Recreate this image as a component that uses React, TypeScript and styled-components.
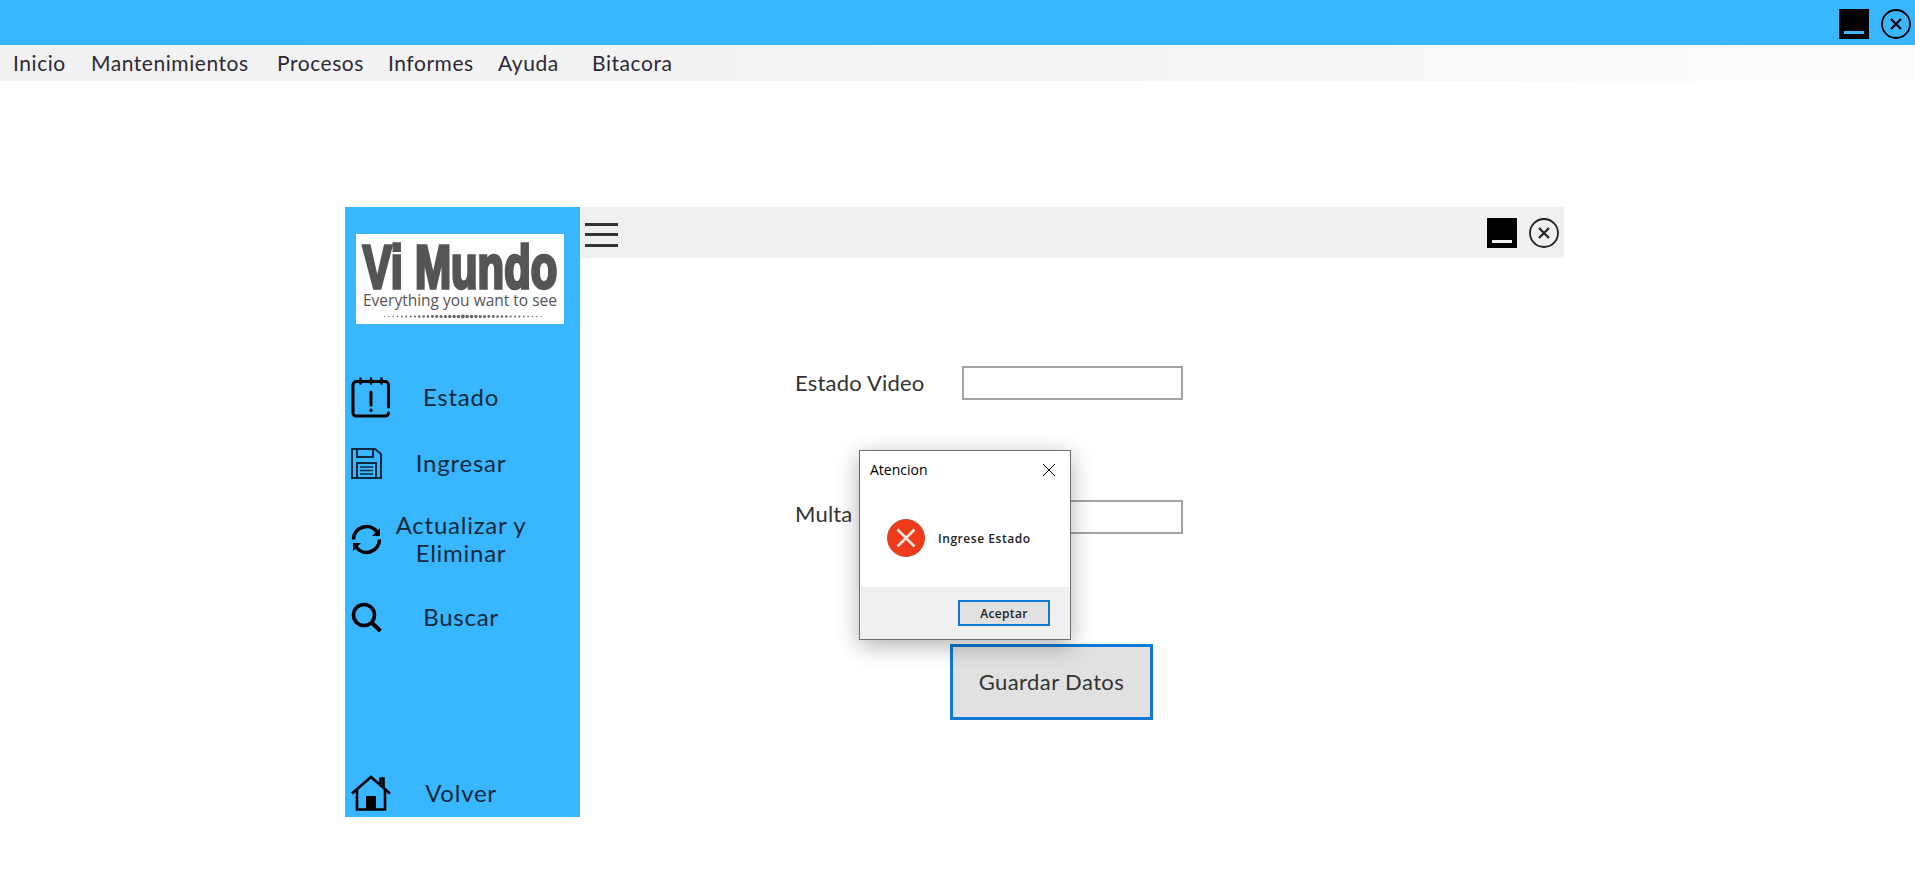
import React from "react";
import styled, { createGlobalStyle } from "styled-components";

const Global = createGlobalStyle`
  html, body { margin: 0; padding: 0; background: #fff; overflow: hidden; }
  body { font-family: "Lato", "Liberation Sans", sans-serif; }
  * { box-sizing: border-box; }
`;

const Page = styled.div`
  width: 1915px;
  height: 871px;
  display: flex;
  flex-direction: column;
`;
const TitleBar = styled.header`
  height: 45px;
  background: #38b6ff;
  display: flex;
  justify-content: flex-end;
  align-items: flex-start;
  gap: 12px;
  padding: 9px 4px 0 0;
`;
const WinButton = styled.button`
  width: 30px;
  height: 30px;
  padding: 0;
  border: 0;
  background: none;
  display: block;
  svg { display: block; }
`;
const MinBlock = styled.button<{ $dash: string }>`
  width: 30px;
  height: 30px;
  padding: 0 0 5px;
  border: 0;
  background: #000;
  display: flex;
  align-items: flex-end;
  justify-content: center;
  &::after {
    content: "";
    width: 20px;
    height: 3px;
    background: ${(p) => p.$dash};
  }
`;
const MenuBar = styled.nav`
  height: 36px;
  background: linear-gradient(90deg, #f1f1f1, #f5f5f5 55%, #fcfcfc);
  display: grid;
  grid-template-columns: 78px 186px 111px 110px 94px auto;
  justify-content: start;
  align-items: center;
  padding-left: 13px;
`;
const MenuItem = styled.span`
  font-size: 21px;
  line-height: 34px;
  letter-spacing: 0.55px;
  color: #2f2935;
`;
const Window = styled.section`
  margin: 126px 0 0 345px;
  width: 1219px;
  height: 610px;
  display: flex;
`;
const Sidebar = styled.aside`
  width: 235px;
  background: #38b6ff;
  display: flex;
  flex-direction: column;
  padding-top: 27px;
`;
const Logo = styled.div`
  width: 208px;
  height: 90px;
  margin: 0 0 40px 11px;
  background: #fff;
  display: flex;
  flex-direction: column;
  align-items: center;
  color: #555;
`;
const LogoTitle = styled.div`
  font-family: "Liberation Sans", sans-serif;
  font-weight: 700;
  font-size: 62px;
  line-height: 48px;
  height: 48px;
  margin-top: 9px;
  -webkit-text-stroke: 3.5px #555;
  white-space: nowrap;
  transform: scaleX(0.7);
`;
const LogoSub = styled.div`
  font-family: "Open Sans", sans-serif;
  font-size: 15.5px;
  line-height: 18px;
  white-space: nowrap;
`;
const LogoDots = styled.svg`
  display: block;
  margin: 5px 0 0 6px;
`;
const NavItem = styled.div<{ $h: number }>`
  height: ${(p) => p.$h}px;
  display: grid;
  grid-template-columns: 39px 142px;
  align-items: center;
  padding-left: 6px;
  flex: none;
  svg { display: block; overflow: visible; }
`;
const NavLabel = styled.span`
  text-align: center;
  font-size: 24px;
  line-height: 28px;
  letter-spacing: 0.75px;
  color: #10293a;
`;
const Spacer = styled.div`
  flex: 1;
`;
const Main = styled.main`
  flex: 1;
  position: relative;
  display: flex;
  flex-direction: column;
`;
const PanelHeader = styled.div`
  height: 51px;
  background: #f0f0f0;
  display: flex;
  align-items: center;
  padding: 0 5px;
  gap: 12px;
`;
const Burger = styled.div`
  width: 33px;
  margin: 4px auto 0 0;
  display: flex;
  flex-direction: column;
  gap: 7.5px;
  span { display: block; height: 3px; background: #333; }
`;
const Form = styled.div`
  display: grid;
  grid-template-columns: 167px 221px;
  grid-auto-rows: 34px;
  row-gap: 100px;
  margin: 108px 0 0 215px;
  align-items: center;
`;
const Label = styled.label<{ $up?: number }>`
  font-size: 22px;
  line-height: 30px;
  letter-spacing: 0.2px;
  color: #333;
  margin-top: ${(p) => -(p.$up ?? 0)}px;
`;
const Field = styled.input`
  height: 34px;
  border: 2px solid #a3a3a3;
  background: #fff;
  outline: none;
`;
const SaveButton = styled.button`
  width: 203px;
  height: 76px;
  margin: 110px 0 0 370px;
  padding: 0 0 2px;
  border: 3px solid #0f7ad5;
  background: #e1e1e1;
  font-family: inherit;
  font-size: 22px;
  letter-spacing: 0.4px;
  color: #333;
`;
const Dialog = styled.div`
  position: absolute;
  left: 279px;
  top: 243px;
  width: 212px;
  height: 190px;
  background: #fff;
  border: 1px solid #6f6f6f;
  box-shadow: 0 6px 22px rgba(0, 0, 0, 0.3);
  display: flex;
  flex-direction: column;
  font-family: "Open Sans", sans-serif;
`;
const DialogTitle = styled.div`
  height: 37px;
  padding: 0 14px 0 10px;
  display: flex;
  align-items: center;
  justify-content: space-between;
  font-size: 14px;
  color: #000;
  svg { display: block; }
`;
const DialogBody = styled.div`
  flex: 1;
  display: flex;
  align-items: center;
  gap: 13px;
  padding: 1px 0 0 27px;
  font-size: 12px;
  font-weight: 600;
  letter-spacing: 0.55px;
  color: #222;
  svg { display: block; }
`;
const DialogFooter = styled.div`
  height: 52px;
  background: #f0f0f0;
  display: flex;
  justify-content: flex-end;
  padding: 13px 20px 0 0;
`;
const DialogButton = styled.button`
  width: 92px;
  height: 26px;
  padding: 1px 0 0;
  border: 2px solid #0f7ad5;
  background: #e1e1e1;
  font-family: inherit;
  font-size: 12px;
  font-weight: 600;
  letter-spacing: 0.3px;
  color: #222;
`;

const CloseCircle = ({ color = "#000" }: { color?: string }) => (
  <svg width="30" height="30" viewBox="0 0 30 30" fill="none" stroke={color}>
    <circle cx="15" cy="15" r="14" strokeWidth="1.8" />
    <path d="M10 10 L20 20 M20 10 L10 20" strokeWidth="2.2" />
  </svg>
);

const CalendarIcon = () => (
  <svg width="40" height="40" viewBox="0 0 40 40" fill="none" stroke="#000" strokeWidth="3" strokeLinecap="round" strokeLinejoin="round">
    <path d="M10 4.5H5.5a3.5 3.5 0 0 0-3.5 3.5v28a3 3 0 0 0 3 3h29a3.5 3.5 0 0 0 3.5-3" />
    <path d="M30 4.5h4a3.5 3.5 0 0 1 3.5 3.5v22" />
    <path d="M9.5 4.5h21" />
    <path d="M9.5 1.5v5M20 1.5v5M30.5 1.5v5" strokeWidth="2.5" />
    <path d="M20 15v13" />
    <path d="M20 33v.5" strokeWidth="3.2" />
  </svg>
);
const SaveIcon = () => (
  <svg width="31" height="31" viewBox="0 0 31 31" fill="none" stroke="#0c2a3f" strokeWidth="2">
    <path d="M1 1H24L30 6V30H1Z" />
    <path d="M6 1V9H22V1" />
    <path d="M6 30V15H25V30" />
    <path d="M9 19H22M9 22.5H22M9 26H22" strokeWidth="1.6" />
  </svg>
);
const RefreshIcon = () => (
  <svg width="31" height="31" viewBox="0 0 31 31" fill="none" stroke="#000" strokeWidth="3.6">
    <path d="M2.5 15.5A13 13 0 0 1 26 8" />
    <path d="M28.5 15.5A13 13 0 0 1 5 23" />
    <path d="M29 4V12H21Z" fill="#000" stroke="none" />
    <path d="M2 27V19H10Z" fill="#000" stroke="none" />
  </svg>
);
const SearchIcon = () => (
  <svg width="31" height="31" viewBox="0 0 31 31" fill="none" stroke="#000" strokeWidth="3.6">
    <circle cx="13" cy="13" r="10.5" />
    <path d="M20.5 20.5L29.5 29" strokeWidth="4" />
  </svg>
);
const HomeIcon = () => (
  <svg width="40" height="36" viewBox="0 0 40 36" fill="none" stroke="#000" strokeWidth="2.6">
    <path d="M1 18.5L20 2L39 18.5" />
    <path d="M6 15V34.5H34V15" />
    <path d="M29.5 9V3.5H32.5V12" />
    <rect x="15" y="21" width="10" height="13.5" fill="#000" stroke="none" />
  </svg>
);
const ErrorIcon = () => (
  <svg width="38" height="38" viewBox="0 0 38 38">
    <circle cx="19" cy="19" r="18.5" fill="#ef3b19" stroke="#c8492f" strokeWidth="1" />
    <path d="M10.5 10.5L27.5 27.5M27.5 10.5L10.5 27.5" stroke="#fbe6e0" strokeWidth="2.6" />
  </svg>
);
const XIcon = () => (
  <svg width="14" height="14" viewBox="0 0 14 14" stroke="#000" strokeWidth="1">
    <path d="M1 1L13 13M13 1L1 13" />
  </svg>
);

const dots = Array.from({ length: 37 }, (_, i) => {
  const d = Math.abs(i - 18) / 18;
  return { x: 1.5 + i * 4.35, r: 1.9 - d * 1.3 };
});

const nav = [
  { label: "Estado", h: 66, icon: <CalendarIcon /> },
  { label: "Ingresar", h: 66, icon: <SaveIcon /> },
  { label: "Actualizar y Eliminar", h: 86, icon: <RefreshIcon /> },
  { label: "Buscar", h: 70, icon: <SearchIcon /> },
];

export default function App() {
  return (
    <Page>
      <Global />
      <TitleBar>
        <MinBlock $dash="#38b6ff" aria-label="Minimizar" />
        <WinButton aria-label="Cerrar">
          <CloseCircle />
        </WinButton>
      </TitleBar>
      <MenuBar>
        {["Inicio", "Mantenimientos", "Procesos", "Informes", "Ayuda", "Bitacora"].map((m) => (
          <MenuItem key={m}>{m}</MenuItem>
        ))}
      </MenuBar>
      <Window>
        <Sidebar>
          <Logo>
            <LogoTitle>Vi Mundo</LogoTitle>
            <LogoSub>Everything you want to see</LogoSub>
            <LogoDots width="160" height="5" viewBox="0 0 160 5">
              {dots.map((d) => (
                <circle key={d.x} cx={d.x} cy="2.5" r={d.r} fill="#666" />
              ))}
            </LogoDots>
          </Logo>
          {nav.map((n) => (
            <NavItem key={n.label} $h={n.h}>
              {n.icon}
              <NavLabel>{n.label}</NavLabel>
            </NavItem>
          ))}
          <Spacer />
          <NavItem $h={48}>
            <HomeIcon />
            <NavLabel>Volver</NavLabel>
          </NavItem>
        </Sidebar>
        <Main>
          <PanelHeader>
            <Burger>
              <span />
              <span />
              <span />
            </Burger>
            <MinBlock $dash="#f0f0f0" aria-label="Minimizar" />
            <WinButton aria-label="Cerrar">
              <CloseCircle color="#222" />
            </WinButton>
          </PanelHeader>
          <Form>
            <Label>Estado Video</Label>
            <Field />
            <Label $up={6}>Multa por Dia</Label>
            <Field />
          </Form>
          <SaveButton>Guardar Datos</SaveButton>
          <Dialog>
            <DialogTitle>
              Atencion
              <XIcon />
            </DialogTitle>
            <DialogBody>
              <ErrorIcon />
              Ingrese Estado
            </DialogBody>
            <DialogFooter>
              <DialogButton>Aceptar</DialogButton>
            </DialogFooter>
          </Dialog>
        </Main>
      </Window>
    </Page>
  );
}
